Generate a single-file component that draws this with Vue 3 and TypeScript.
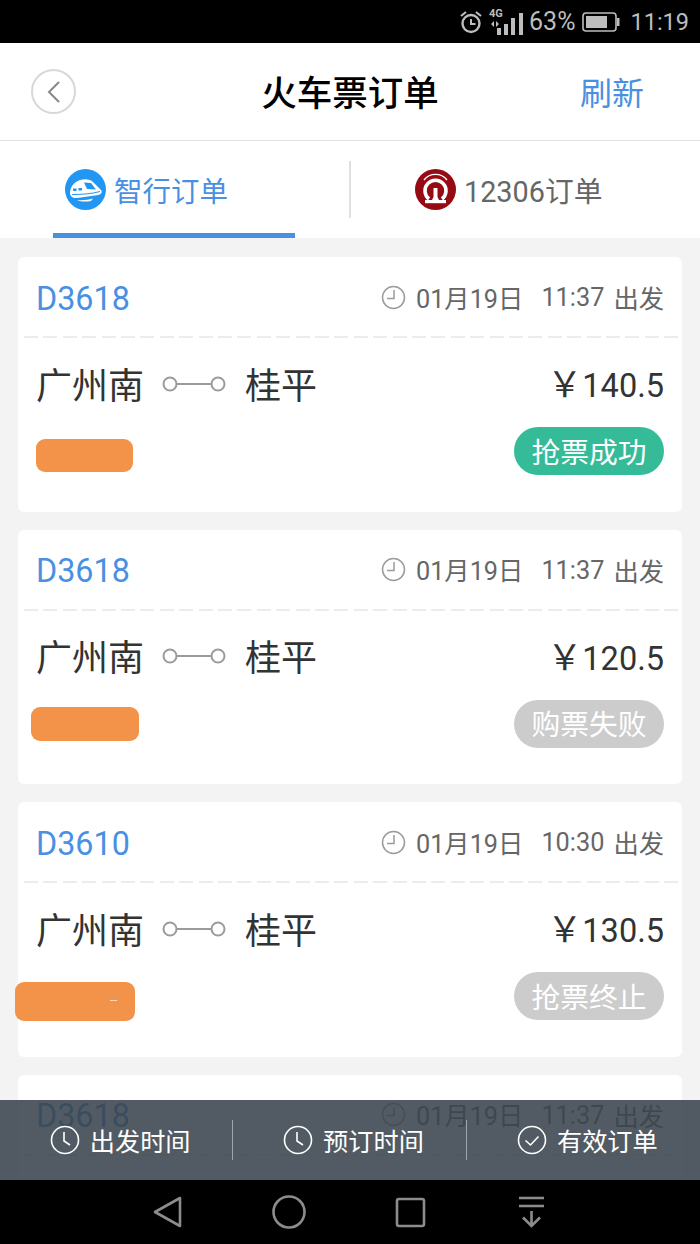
<script setup lang="ts">
interface Order {
  train: string;
  time: string;
  price: string;
  status: string;
  ok: boolean;
  speck?: boolean;
  blob: { left: number; top: number; width: number; height: number };
}

const orders: Order[] = [
  { train: "D3618", time: "11:37", price: "140.5", status: "抢票成功", ok: true, blob: { left: 18, top: 182, width: 97, height: 33 } },
  { train: "D3618", time: "11:37", price: "120.5", status: "购票失败", ok: false, blob: { left: 13, top: 177.5, width: 108, height: 34 } },
  { train: "D3610", time: "10:30", price: "130.5", status: "抢票终止", ok: false, speck: true, blob: { left: -3, top: 180, width: 120, height: 39 } },
  { train: "D3618", time: "11:37", price: "140.5", status: "抢票成功", ok: true, blob: { left: 18, top: 182, width: 97, height: 33 } },
];

const blobStyle = (b: Order["blob"]) => ({
  left: b.left + "px",
  top: b.top + "px",
  width: b.width + "px",
  height: b.height + "px",
});
</script>

<template>
  <div class="phone">
    <div class="status">
      <svg width="24" height="24" viewBox="0 0 24 24" class="alarm">
        <circle cx="12" cy="13.500" r="8.500" fill="none" stroke="#bdbdbd" stroke-width="2.400" />
        <path d="M12 9v5h4.500" fill="none" stroke="#bdbdbd" stroke-width="2" />
        <path d="M2 6l5-4M22 6l-5-4" stroke="#bdbdbd" stroke-width="2.200" />
      </svg>
      <div class="net">
        <span class="g4">4G</span>
        <svg width="36" height="30" viewBox="0 0 36 30">
          <path d="M6 14v6l-3-3zM8 14v6l3-3z" fill="#bdbdbd" />
          <rect x="9" y="21" width="4" height="7" fill="#bdbdbd" />
          <rect x="16" y="17" width="4" height="11" fill="#bdbdbd" />
          <rect x="23" y="11" width="4" height="17" fill="#bdbdbd" />
          <rect x="31" y="6" width="4" height="22" fill="#bdbdbd" />
        </svg>
      </div>
      <span class="pct">63%</span>
      <svg width="40" height="20" viewBox="0 0 40 20" class="batt">
        <rect x="3" y="1" width="33" height="18" rx="3" fill="none" stroke="#bdbdbd" stroke-width="1.600" />
        <rect x="6" y="4" width="21" height="12" fill="#bdbdbd" />
        <rect x="37" y="6" width="2.500" height="8" fill="#bdbdbd" />
      </svg>
      <span class="clock">11:19</span>
    </div>

    <header class="head">
      <button class="back">
        <svg width="14" height="24" viewBox="0 0 14 24">
          <path d="M12 2L2 12l10 10" fill="none" stroke="#888" stroke-width="2" />
        </svg>
      </button>
      <h1>火车票订单</h1>
      <span class="refresh">刷新</span>
    </header>

    <nav class="tabs">
      <div class="tab on">
        <svg width="41" height="41" viewBox="0 0 41 41">
          <circle cx="20.500" cy="20.500" r="20.500" fill="#2196f3" />
          <path d="M5 24C5 18 9 13 15 11c5-1.500 10-1 13 2l8 8c1.500 2 .5 4-2.500 5L12 29c-4 .5-7-1.500-7-5z" fill="#fff" />
          <path d="M19 13.500l7 .5 5 6.500-9-.5z" fill="#2196f3" />
          <path d="M8 19.500h3.500V22H8zM13.500 19h3.500v2.500h-3.500z" fill="#2196f3" />
          <path d="M7 25.500c9 0 19-.5 28-3" fill="none" stroke="#2196f3" stroke-width="1" />
          <path d="M12 31c5 .5 11 0 16-1.500l-2 2.500c-4 .8-8 .8-12 0z" fill="#fff" />
        </svg>
        <span>智行订单</span>
        <i class="bar"></i>
      </div>
      <div class="tab">
        <svg width="41" height="41" viewBox="0 0 41 41">
          <circle cx="20.500" cy="20.500" r="20.500" fill="#960a14" />
          <path d="M9 11a14.500 14.500 0 0 1 23 0" fill="none" stroke="#fff" stroke-width="1.400" />
          <path d="M14 30a10.500 10.500 0 1 1 13 0" fill="none" stroke="#fff" stroke-width="3.600" />
          <path d="M18.500 19h4v9l2 4h-8l2-4z" fill="#fff" />
          <rect x="10" y="31" width="21" height="3.200" fill="#fff" />
        </svg>
        <span class="plain">12306订单</span>
      </div>
    </nav>

    <main class="list">
      <article v-for="(o, i) in orders" :key="i" class="card">
        <div class="top">
          <span class="train">{{ o.train }}</span>
          <span class="when">
            <svg width="25" height="25" viewBox="0 0 25 25">
              <circle cx="12.500" cy="12.500" r="11" fill="none" stroke="#9b9b9b" stroke-width="1.500" />
              <path d="M13 5v8.500H6" fill="none" stroke="#9b9b9b" stroke-width="1.500" />
            </svg>
            <span class="date">01月19日</span>
            <span class="time">{{ o.time }}</span>
            <span>出发</span>
          </span>
        </div>
        <div class="dash"></div>
        <div class="route">
          <span class="city">广州南</span>
          <svg width="64" height="18" viewBox="0 0 64 18" class="link">
            <circle cx="8" cy="9" r="6.500" fill="none" stroke="#9b9b9b" stroke-width="2" />
            <path d="M15 9h34" stroke="#9b9b9b" stroke-width="2" />
            <circle cx="56" cy="9" r="6.500" fill="none" stroke="#9b9b9b" stroke-width="2" />
          </svg>
          <span class="city">桂平</span>
          <span class="price"><span class="yen">￥</span>{{ o.price }}</span>
        </div>
        <div class="foot">
          <span class="pill" :class="{ ok: o.ok }">{{ o.status }}</span>
        </div>
        <div class="blob" :style="blobStyle(o.blob)">
          <i v-if="o.speck" class="speck"></i>
        </div>
      </article>

      <div class="filter">
        <div class="fitem">
          <svg width="30" height="30" viewBox="0 0 30 30">
            <circle cx="15" cy="15" r="13.500" fill="none" stroke="#fff" stroke-width="1.600" />
            <path d="M14 7v9l6 4" fill="none" stroke="#fff" stroke-width="1.600" />
          </svg>
          <span>出发时间</span>
        </div>
        <div class="fitem">
          <svg width="30" height="30" viewBox="0 0 30 30">
            <circle cx="15" cy="15" r="13.500" fill="none" stroke="#fff" stroke-width="1.600" />
            <path d="M14 7v9l6 4" fill="none" stroke="#fff" stroke-width="1.600" />
          </svg>
          <span>预订时间</span>
        </div>
        <div class="fitem">
          <svg width="30" height="30" viewBox="0 0 30 30">
            <circle cx="15" cy="15" r="13.500" fill="none" stroke="#fff" stroke-width="1.600" />
            <path d="M8.500 15.500l5 4.500 8-8.500" fill="none" stroke="#fff" stroke-width="1.600" />
          </svg>
          <span>有效订单</span>
        </div>
      </div>
    </main>

    <footer class="sysnav">
      <svg width="30" height="34" viewBox="0 0 30 34">
        <path d="M27 3v28L2 17z" fill="none" stroke="#8c8c8c" stroke-width="2.600" stroke-linejoin="round" />
      </svg>
      <svg width="34" height="34" viewBox="0 0 34 34">
        <circle cx="17" cy="17" r="15.500" fill="none" stroke="#8c8c8c" stroke-width="2.600" />
      </svg>
      <svg width="31" height="31" viewBox="0 0 31 31">
        <rect x="2" y="2" width="27" height="27" rx="2" fill="none" stroke="#8c8c8c" stroke-width="2.600" />
      </svg>
      <svg class="down" width="27" height="32" viewBox="0 0 27 32">
        <path d="M1 2h25M1 10h25M13.500 15v15M5 21.500l8.500 8.500 8.500-8.500" fill="none" stroke="#8c8c8c" stroke-width="2.600" />
      </svg>
    </footer>
  </div>
</template>

<style>
html,
body {
  margin: 0;
  background: #f3f3f3;
}
</style>

<style scoped>
.phone {
  width: 700px;
  height: 1244px;
  display: flex;
  flex-direction: column;
  overflow: hidden;
  font-family: Roboto, "Noto Sans CJK SC", sans-serif;
  background: #f3f3f3;
}
.status {
  height: 43px;
  flex: none;
  background: #000;
  color: #bdbdbd;
  display: flex;
  align-items: center;
  justify-content: flex-end;
  padding-right: 11px;
  box-sizing: border-box;
  font-size: 25px;
}
.alarm {
  margin-right: 5px;
}
.net {
  position: relative;
  width: 36px;
  height: 30px;
  margin-right: 5px;
}
.g4 {
  position: absolute;
  left: 1px;
  top: 1px;
  font-size: 11px;
  font-weight: 700;
  line-height: 11px;
}
.net svg {
  display: block;
}
.pct {
  margin-right: 5px;
}
.batt {
  margin-right: 10px;
}
.clock {
  font-size: 23.500px;
}
.head {
  height: 98px;
  flex: none;
  background: #fff;
  border-bottom: 1px solid #e0e0e0;
  box-sizing: border-box;
  display: grid;
  grid-template-columns: 1fr auto 1fr;
  align-items: center;
  padding: 0 31px;
}
.back {
  width: 45px;
  height: 45px;
  padding: 0;
  border: 2px solid #d8d8d8;
  border-radius: 50%;
  background: #fff;
  display: flex;
  align-items: center;
  justify-content: center;
}
.head h1 {
  margin: 0 0 3px;
  font-size: 35.500px;
  font-weight: 500;
  color: #000;
}
.refresh {
  justify-self: end;
  margin: 0 25px 2px 0;
  font-size: 32px;
  color: #4a90e2;
}
.tabs {
  height: 97px;
  flex: none;
  background: #fff;
  display: grid;
  grid-template-columns: 1fr 1fr;
  align-items: center;
  position: relative;
}
.tabs::after {
  content: "";
  position: absolute;
  left: 349px;
  top: 20px;
  width: 2px;
  height: 57px;
  background: #e0e0e0;
}
.tab {
  display: flex;
  align-items: center;
  gap: 8px;
  padding-left: 65px;
  font-size: 28.500px;
  color: #4a90e2;
  height: 100%;
  position: relative;
}
.plain {
  color: #666;
  font-size: 28.800px;
}
.bar {
  position: absolute;
  left: 53px;
  bottom: 0;
  width: 242px;
  height: 5px;
  background: #4a90e2;
}
.list {
  flex: 1;
  min-height: 0;
  position: relative;
  overflow: hidden;
  padding: 19px 18px 0;
  display: flex;
  flex-direction: column;
  gap: 18px;
}
.card {
  flex: none;
  height: 254.500px;
  background: #fff;
  border-radius: 6px;
  position: relative;
}
.top {
  height: 79px;
  display: flex;
  align-items: center;
  justify-content: space-between;
  padding: 1px 18px 0;
  box-sizing: border-box;
}
.train {
  font-size: 32.300px;
  color: #4a90e2;
  margin-top: 3px;
}
.when {
  display: flex;
  align-items: center;
  font-size: 25.300px;
  color: #666;
}
.when svg {
  margin-right: 10px;
}
.date {
  margin: -1px 18px 0 0;
}
.time {
  margin: 1px 9px 0 0;
}
.dash {
  height: 2px;
  margin: 0 2px 0 6px;
  background: repeating-linear-gradient(90deg, #ececec 0 14px, transparent 14px 19.400px);
}
.route {
  display: flex;
  align-items: center;
  padding: 0 18px;
  height: 89px;
}
.city {
  font-size: 36px;
  color: #333;
}
.link {
  margin: 2px 19px 0 18px;
}
.price {
  margin: -2px 0 0 auto;
  font-size: 32.500px;
  color: #333;
}
.yen {
  font-size: 35px;
}
.foot {
  display: flex;
  justify-content: flex-end;
  padding-right: 18px;
}
.pill {
  width: 150px;
  height: 48px;
  padding-bottom: 2px;
  box-sizing: border-box;
  border-radius: 24px;
  background: #ccc;
  color: #fff;
  font-size: 28.800px;
  display: flex;
  align-items: center;
  justify-content: center;
}
.pill.ok {
  background: #36bb98;
}
.blob {
  position: absolute;
  background: #f3934a;
  border-radius: 9px;
}
.speck {
  position: absolute;
  left: 95px;
  top: 18px;
  width: 7px;
  height: 1px;
  background: #f8d9c0;
}
.filter {
  position: absolute;
  left: 0;
  right: 0;
  bottom: 0;
  height: 80px;
  background: rgba(56, 67, 76, 0.87);
  display: grid;
  grid-template-columns: repeat(3, 1fr);
  align-items: center;
}
.fitem {
  height: 40px;
  display: flex;
  align-items: center;
  justify-content: center;
  gap: 10px;
  padding-left: 8px;
  box-sizing: border-box;
  color: #fff;
  font-size: 25.200px;
  border-right: 1px solid rgba(255, 255, 255, 0.45);
}
.fitem:last-child {
  border-right: 0;
}
.sysnav {
  height: 64px;
  flex: none;
  background: #000;
  display: grid;
  grid-template-columns: 30px 34px 31px 27px;
  justify-content: start;
  align-items: center;
  column-gap: 89px;
  padding-left: 153px;
}
.sysnav svg {
  display: block;
}
.down {
  margin-left: 3px;
}
</style>
